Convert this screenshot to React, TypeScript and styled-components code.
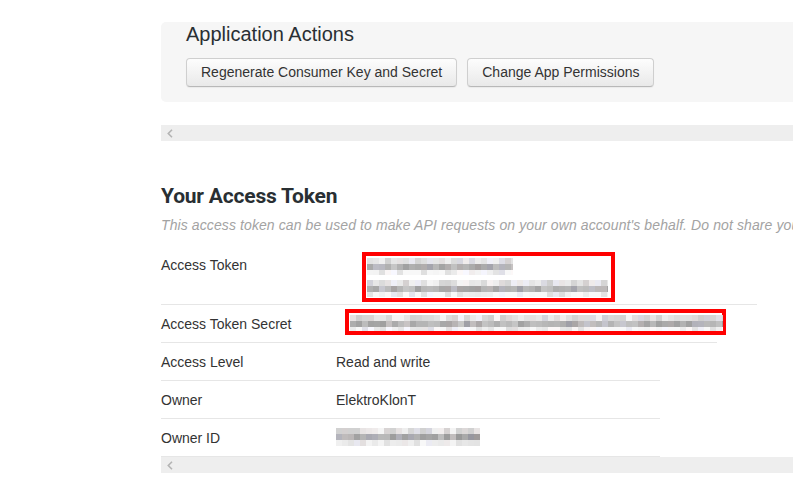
import React from "react";
import styled, { createGlobalStyle } from "styled-components";

const GlobalStyle = createGlobalStyle`
  html, body {
    margin: 0;
    padding: 0;
    background: #ffffff;
    overflow: hidden;
  }
  body {
    font-family: "Liberation Sans", Arial, sans-serif;
    color: #333333;
  }
`;

const Page = styled.div`
  width: 900px;
  padding: 22px 0 0 161px;
  display: flex;
  flex-direction: column;
  align-items: flex-start;
`;

const Panel = styled.section`
  width: 680px;
  background: #f6f6f6;
  border-radius: 5px;
  padding: 0 25px 15px 25px;
  box-sizing: border-box;
  display: flex;
  flex-direction: column;
  gap: 12px;
`;

const PanelTitle = styled.h2`
  margin: 0;
  font-size: 20px;
  line-height: 24px;
  font-weight: normal;
  color: #292f33;
`;

const ButtonRow = styled.div`
  display: flex;
  gap: 10px;
`;

const Button = styled.button`
  height: 29px;
  box-sizing: border-box;
  padding: 0 14px;
  font-family: "Liberation Sans", Arial, sans-serif;
  font-size: 14px;
  line-height: 27px;
  color: #333333;
  background: linear-gradient(#fdfdfd, #e9e9e9);
  border: 1px solid #cfcfcf;
  border-bottom-color: #b8b8b8;
  border-radius: 4px;
  box-shadow: 0 1px 1px rgba(0, 0, 0, 0.05);
  cursor: pointer;
  white-space: nowrap;
`;

const ScrollStrip = styled.div<{ $gap: number }>`
  width: 680px;
  height: 16px;
  margin-top: ${(p) => p.$gap}px;
  background: #eeeeee;
  display: flex;
  align-items: center;
  padding-left: 6px;
  box-sizing: border-box;
`;

const SectionTitle = styled.h2`
  margin: 42px 0 0 0;
  font-family: Roboto, "Liberation Sans", sans-serif;
  font-weight: 700;
  font-size: 21px;
  line-height: 26px;
  letter-spacing: -0.2px;
  color: #292f33;
`;

const Lead = styled.p`
  margin: 6px 0 0 0;
  font-size: 14px;
  line-height: 20px;
  font-style: italic;
  letter-spacing: 0.1px;
  color: #a3a3a3;
  white-space: nowrap;
`;

const Table = styled.div`
  margin-top: 11px;
  display: flex;
  flex-direction: column;
`;

const Row = styled.div<{ $width: number }>`
  width: ${(p) => p.$width}px;
  display: flex;
  align-items: flex-start;
  border-bottom: 1px solid #e6e6e6;
`;

const Label = styled.div`
  width: 175px;
  flex: none;
  padding: 9px 0 8px 0;
  font-size: 14px;
  line-height: 20px;
  color: #333333;
`;

const Value = styled.div`
  padding: 9px 0 8px 0;
  font-size: 14px;
  line-height: 20px;
  color: #333333;
`;

const MaskedValue = styled.div<{ $pad: string }>`
  padding: ${(p) => p.$pad};
  display: flex;
`;

const RedBox = styled.div<{ $w: number; $h: number }>`
  width: ${(p) => p.$w}px;
  height: ${(p) => p.$h}px;
  box-sizing: border-box;
  border: 4px solid #ff0000;
  display: flex;
  flex-direction: column;
  padding: 2px 0 0 1px;
  gap: 5px;
`;

function mulberry32(a: number) {
  return function () {
    a |= 0;
    a = (a + 0x6d2b79f5) | 0;
    let t = Math.imul(a ^ (a >>> 15), 1 | a);
    t = (t + Math.imul(t ^ (t >>> 7), 61 | t)) ^ t;
    return ((t ^ (t >>> 14)) >>> 0) / 4294967296;
  };
}

type MosaicProps = { width: number; height: number; seed: number; dark?: number };

const Mosaic: React.FC<MosaicProps> = ({ width, height, seed, dark = 1 }) => {
  const rnd = mulberry32(seed);
  const cell = 6;
  const cols = Math.ceil(width / cell);
  const rows = Math.ceil(height / cell);
  const rects: React.ReactNode[] = [];
  for (let r = 0; r < rows; r++) {
    const phase = rows >= 3 ? r % 3 : 1;
    const base = phase === 1 ? 200 - 25 * dark : phase === 0 ? 222 : 236;
    for (let c = 0; c < cols; c++) {
      const v = Math.round(base + (rnd() - 0.4) * 40);
      const s = Math.max(150, Math.min(248, v));
      const tint = Math.round((rnd() - 0.5) * 14);
      const fill = `rgb(${s + (tint > 4 ? 4 : 0)},${s},${Math.min(255, s + (tint < -4 ? 8 : 0))})`;
      rects.push(<rect key={`${r}-${c}`} x={c * cell} y={r * cell} width={cell} height={cell} fill={fill} />);
    }
  }
  return (
    <svg width={width} height={height} viewBox={`0 0 ${width} ${height}`} style={{ display: "block" }}>
      {rects}
    </svg>
  );
};

const Chevron = () => (
  <svg width="6" height="9" viewBox="0 0 6 9">
    <polyline points="5,0.8 1.3,4.5 5,8.2" fill="none" stroke="#b4b4b4" strokeWidth="1.6" />
  </svg>
);

export default function App() {
  return (
    <>
      <GlobalStyle />
      <Page>
        <Panel>
          <PanelTitle>Application Actions</PanelTitle>
          <ButtonRow>
            <Button>Regenerate Consumer Key and Secret</Button>
            <Button>Change App Permissions</Button>
          </ButtonRow>
        </Panel>
        <ScrollStrip $gap={23}>
          <Chevron />
        </ScrollStrip>

        <SectionTitle>Your Access Token</SectionTitle>
        <Lead>
          This access token can be used to make API requests on your own account's behalf. Do not share your access token secret with anyone.
        </Lead>

        <Table>
          <Row $width={596}>
            <Label>Access Token</Label>
            <MaskedValue $pad="6px 0 2px 26px">
              <RedBox $w={253} $h={50}>
                <Mosaic width={146} height={17} seed={11} />
                <Mosaic width={241} height={17} seed={23} />
              </RedBox>
            </MaskedValue>
          </Row>
          <Row $width={556}>
            <Label>Access Token Secret</Label>
            <MaskedValue $pad="4px 0 7px 9px">
              <RedBox $w={381} $h={26}>
                <Mosaic width={373} height={16} seed={37} />
              </RedBox>
            </MaskedValue>
          </Row>
          <Row $width={499}>
            <Label>Access Level</Label>
            <Value>Read and write</Value>
          </Row>
          <Row $width={499}>
            <Label>Owner</Label>
            <Value>ElektroKlonT</Value>
          </Row>
          <Row $width={499}>
            <Label>Owner ID</Label>
            <MaskedValue $pad="9px 0 8px 0">
              <Mosaic width={144} height={18} seed={53} dark={1.4} />
            </MaskedValue>
          </Row>
        </Table>
        <ScrollStrip $gap={0}>
          <Chevron />
        </ScrollStrip>
      </Page>
    </>
  );
}
